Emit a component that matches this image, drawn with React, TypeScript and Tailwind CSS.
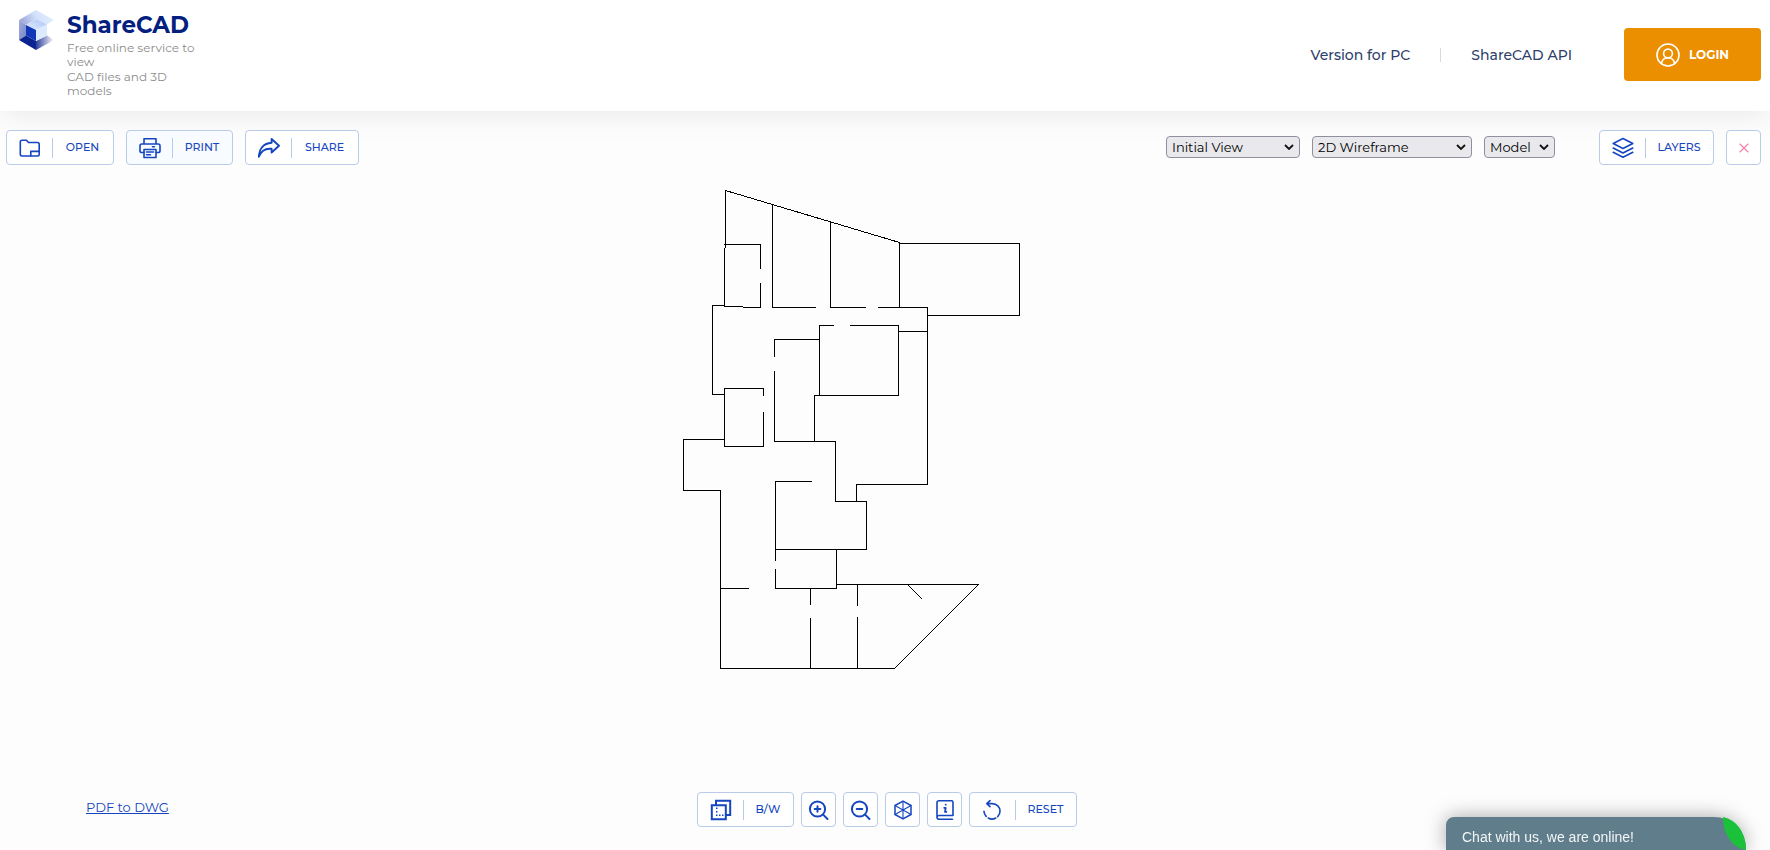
import type { ReactNode } from "react";

const stroke = {
  fill: "none",
  stroke: "currentColor",
  strokeWidth: 1.6,
  strokeLinecap: "round" as const,
  strokeLinejoin: "round" as const,
};

function Logo() {
  return (
    <svg width="35" height="40" viewBox="0 0 35 40" aria-hidden="true">
      <defs>
        <linearGradient id="top" x1="0" y1="0.6" x2="1" y2="0.4">
          <stop offset="0" stopColor="#9aa5d6" />
          <stop offset="0.5" stopColor="#d3e1fa" />
          <stop offset="1" stopColor="#e3effe" />
        </linearGradient>
        <linearGradient id="side" x1="0" y1="0" x2="1" y2="1">
          <stop offset="0" stopColor="#a3addb" />
          <stop offset="1" stopColor="#7685c6" />
        </linearGradient>
        <linearGradient id="base" x1="0" y1="0" x2="1" y2="0">
          <stop offset="0" stopColor="#2e3f9c" />
          <stop offset="1" stopColor="#ffffff" />
        </linearGradient>
        <linearGradient id="lid" x1="0" y1="1" x2="1" y2="0">
          <stop offset="0" stopColor="#e2edfe" />
          <stop offset="1" stopColor="#a9c4f8" />
        </linearGradient>
      </defs>
      <path d="M0 10 17 0 35 10 28 14.5 17 9 7 15Z" fill="url(#top)" />
      <path d="M0 10 7 15V25.5L0 30Z" fill="url(#side)" />
      <path d="M0 30 7 25.5 17 31V40Z" fill="#0b2391" />
      <path d="M17 31 28 25.5 35 30 17 40Z" fill="url(#base)" />
      <path d="M7 15 17 9 28 14.5 17 20Z" fill="url(#lid)" />
      <path d="M7 15 17 20V31L7 25.5Z" fill="#1137b8" />
      <path d="M17 20 28 14.5V25.5L17 31Z" fill="#dceafe" />
    </svg>
  );
}

function Icon({ children }: { children: ReactNode }) {
  return (
    <svg width="22" height="22" viewBox="0 0 22 22" className="shrink-0" aria-hidden="true" {...stroke}>
      {children}
    </svg>
  );
}

const FolderIcon = () => (
  <Icon>
    <path d="M3 3.2H7.5L9.5 5.5H18.5Q20.2 5.5 20.2 7.2V17.3Q20.2 19 18.5 19H3Q1.3 19 1.3 17.3V5Q1.3 3.2 3 3.2Z" />
    <path d="M11.8 18.8V14.4H20" />
  </Icon>
);
const PrinterIcon = () => (
  <Icon>
    <path d="M5 6.5V1.8H17V6.5M5 15.5H2.8Q1 15.5 1 13.7V8.8Q1 7 2.8 7H19.2Q21 7 21 8.8V13.7Q21 15.5 19.2 15.5H17" />
    <path d="M5 12.5H17V20.5H5ZM7.5 15H14.5M7.5 17.8H11.5M13.5 9.8H15.5" />
  </Icon>
);
const ShareIcon = () => (
  <Icon>
    <path d="M13.6 2 21 8.8 13.6 15.5V11.8C8 11.2 3 14 .9 19.8 .8 12 5.5 6.3 13.6 5.8Z" strokeWidth="1.9" />
  </Icon>
);
const LayersIcon = () => (
  <Icon>
    <path d="M11 1.5 20.8 6.5 11 11.5 1.2 6.5ZM1.2 11 11 16 20.8 11M1.2 15.3 11 20.3 20.8 15.3" />
  </Icon>
);
const CopyIcon = () => (
  <Icon>
    <path d="M6 5.2V1.7H20.2V15.9H16.2M1.8 6.2H15.8V20.2H1.8Z" strokeWidth="2" strokeLinejoin="miter" />
    <path
      d="M6 8.5H7.5V10H6ZM6 12H7.5V13.5H6ZM6 15.5H7.5V17H6ZM9 15.5H10.5V17H9ZM12 15.5H13.5V17H12Z"
      fill="currentColor"
      stroke="none"
    />
  </Icon>
);
const ZoomInIcon = () => (
  <Icon>
    <circle cx="9.5" cy="10" r="7.6" strokeWidth="2" />
    <path d="M15.1 15.6 19.5 20M9.5 7.2V12.8M6.7 10H12.3" strokeWidth="2" />
  </Icon>
);
const ZoomOutIcon = () => (
  <Icon>
    <circle cx="9.5" cy="10" r="7.6" strokeWidth="2" />
    <path d="M15.1 15.6 19.5 20M6.7 10H12.3" strokeWidth="2" />
  </Icon>
);
const CubeIcon = () => (
  <Icon>
    <path d="M11 2.2 19 6.5V15.5L11 19.8 3 15.5V6.5Z" strokeWidth="1.5" />
    <path d="M3 6.5 11 11 19 6.5M11 11V19.8M11 2.2V11M11 11 3 15.5M11 11 19 15.5" strokeWidth="1.1" />
  </Icon>
);
const InfoIcon = () => (
  <Icon>
    <path d="M19 16.5V3.2Q19 1.8 17.6 1.8H5Q3 1.8 3 3.8V18Q3 20.2 5 20.2H18.5M3.2 17.6Q3.6 16.5 5 16.5H19" />
    <path d="M10.2 8.8H11.7L11 12.8H12.4M11.7 5.6V5.7" strokeWidth="1.8" />
  </Icon>
);
const ResetIcon = () => (
  <Icon>
    <path d="M5 4.6H10.2C14.8 4.8 18 8 18 12 18 14.2 17.1 16.2 15.7 17.6M8 1.6 4.8 4.6 8 7.6" />
    <path d="M13.7 19C11.5 20.3 8.5 20.3 6.3 19M4.2 17.4C2.9 16 2.1 14.4 2 12.4" />
  </Icon>
);

const tool =
  "flex h-[35px] shrink-0 cursor-pointer items-center rounded border border-[#b9cbe6] text-[11px] font-medium text-[#1546c0]";

function LabelButton({ icon, label, className }: { icon: ReactNode; label: string; className: string }) {
  return (
    <button type="button" className={`${tool} gap-[11px] px-3 ${className}`}>
      {icon}
      <span className="h-5 w-px shrink-0 bg-[#b9cbe6]" />
      <span className="flex-1 text-center">{label}</span>
    </button>
  );
}

function IconButton({ label, children }: { label: string; children: ReactNode }) {
  return (
    <button type="button" aria-label={label} className={`${tool} w-[35px] justify-center bg-white`}>
      {children}
    </button>
  );
}

function Select({ label, options, className }: { label: string; options: string[]; className: string }) {
  return (
    <div className={`relative ${className}`}>
      <select
        aria-label={label}
        className="block h-[22px] w-full appearance-none rounded border border-[#8f8f9d] bg-[#e9e9ed] pr-4 pl-[5px] text-[13px] leading-5 text-black"
      >
        {options.map((o) => (
          <option key={o}>{o}</option>
        ))}
      </select>
      <svg
        width="10"
        height="6"
        viewBox="0 0 10 6"
        className="pointer-events-none absolute top-2 right-[6px]"
        aria-hidden="true"
      >
        <path d="M1 1 5 5 9 1" fill="none" stroke="#111" strokeWidth="1.8" />
      </svg>
    </div>
  );
}

const walls = [
  "M725 247V190L899 242",
  "M724 244H760V268M760 283V307H743M742 306H724V248",
  "M724 305H712V394H724",
  "M772 204V307H815M830 222V307H865M878 307H927",
  "M899 307V243H1019V315H927",
  "M927 307V484H856V501M898 331H927",
  "M833 325H819V395M850 325H898V395H814V441",
  "M819 339H774V356M774 371V441H835V501H866V549H775",
  "M763 395V388H724V446H763V412",
  "M724 439H683V490H720V668H894L978 584H836",
  "M811 481H775V560M775 569V588H836V549",
  "M720 588H748M810 588V604M810 618V668M857 584V605M857 617V668",
  "M908 585L921 598",
];

function FloorPlan() {
  return (
    <svg
      width="404"
      height="480"
      viewBox="683 190 404 480"
      role="img"
      aria-label="Floor plan"
      shapeRendering="crispEdges"
    >
      <g transform="translate(0.5 0.5)" fill="none" stroke="#000" strokeWidth="1" strokeLinecap="square">
        {walls.map((d) => (
          <path key={d} d={d} />
        ))}
      </g>
    </svg>
  );
}

export default function App() {
  return (
    <div className="flex min-h-screen flex-col bg-[#fdfdfd] font-['Montserrat','Inter',sans-serif]">
      <header className="flex items-center justify-between bg-white pr-[9px] pl-[19px] shadow-[0_0_30px_rgba(0,0,0,0.1)]">
        <div className="flex gap-[13px] pt-[10px] pb-[13px]">
          <Logo />
          <div className="w-[134px]">
            <h1 className="text-[23px] leading-[31px] font-bold text-[#04207f]">ShareCAD</h1>
            <div className="flex flex-col gap-px text-xs leading-[14px] text-[#8c8c8c]">
              <p>Free online service to view</p>
              <p>CAD files and 3D models</p>
            </div>
          </div>
        </div>
        <div className="flex items-center pb-0.5">
          <nav className="flex items-center gap-[30px] text-sm font-medium text-[#2e3f6b]">
            <a href="#pc">Version for PC</a>
            <span className="h-[14px] w-px bg-[#d6d9e0]" />
            <a href="#api">ShareCAD API</a>
          </nav>
          <button
            type="button"
            className="ml-[52px] flex h-[53px] w-[137px] cursor-pointer items-center justify-center gap-[9px] rounded bg-[#eb8e00] text-xs font-bold text-white"
          >
            <svg width="24" height="24" viewBox="0 0 24 24" aria-hidden="true" {...stroke}>
              <circle cx="12" cy="12" r="11" />
              <circle cx="12" cy="10.5" r="4.4" />
              <path d="M5.5 20.6C6 17 8.5 14.8 12 14.8S18 17 18.5 20.6" />
            </svg>
            LOGIN
          </button>
        </div>
      </header>

      <div className="flex flex-wrap items-center justify-between gap-3 pt-[19px] pr-[9px] pl-[6px]">
        <div className="flex gap-3">
          <LabelButton icon={<FolderIcon />} label="OPEN" className="w-[108px] bg-white" />
          <LabelButton icon={<PrinterIcon />} label="PRINT" className="w-[107px] bg-[#f8fbff]" />
          <LabelButton icon={<ShareIcon />} label="SHARE" className="w-[114px] bg-white" />
        </div>
        <div className="flex items-center gap-11">
          <div className="flex gap-3 pb-px">
            <Select label="View" options={["Initial View", "Top", "Front", "Left"]} className="w-[134px]" />
            <Select label="Visual style" options={["2D Wireframe", "3D Wireframe", "Shaded"]} className="w-[160px]" />
            <Select label="Layout" options={["Model"]} className="w-[71px]" />
          </div>
          <div className="flex gap-3">
            <LabelButton icon={<LayersIcon />} label="LAYERS" className="w-[115px] bg-white" />
            <IconButton label="Close">
              <svg width="10" height="10" viewBox="0 0 10 10" aria-hidden="true">
                <path d="M.7.7 9.3 9.3M9.3.7.7 9.3" stroke="#f487a5" strokeWidth="1.3" />
              </svg>
            </IconButton>
          </div>
        </div>
      </div>

      <main className="flex flex-1 justify-center pt-[25px] pb-6">
        <FloorPlan />
      </main>

      <footer className="grid grid-cols-[1fr_auto_1fr] items-center pb-[23px] pl-1">
        <a href="#pdf" className="justify-self-start pb-[6px] pl-[82px] text-[13px] leading-5 text-[#1546c0] underline">
          PDF to DWG
        </a>
        <div className="flex gap-[7px]">
          <LabelButton icon={<CopyIcon />} label="B/W" className="w-[97px] bg-white" />
          <IconButton label="Zoom in">
            <ZoomInIcon />
          </IconButton>
          <IconButton label="Zoom out">
            <ZoomOutIcon />
          </IconButton>
          <IconButton label="3D view">
            <CubeIcon />
          </IconButton>
          <IconButton label="Information">
            <InfoIcon />
          </IconButton>
          <LabelButton icon={<ResetIcon />} label="RESET" className="w-[108px] bg-white" />
        </div>
      </footer>

      <button
        type="button"
        className="fixed right-6 bottom-0 h-[33px] w-[300px] cursor-pointer rounded-tl-lg rounded-tr-[32px] bg-[#607d8b] pt-[6px] pl-4 text-left font-['Liberation_Sans',Arial,sans-serif] text-sm text-[#f3f6f7] shadow-[0_0_20px_rgba(0,0,0,0.35)]"
      >
        Chat with us, we are online!
        <svg width="23" height="33" viewBox="0 0 23 33" className="absolute top-0 right-0" aria-hidden="true">
          <path d="M0 0C14 3 23 16 23 33 10 31 0 18 0 0Z" fill="#1bc13a" />
        </svg>
      </button>
    </div>
  );
}
